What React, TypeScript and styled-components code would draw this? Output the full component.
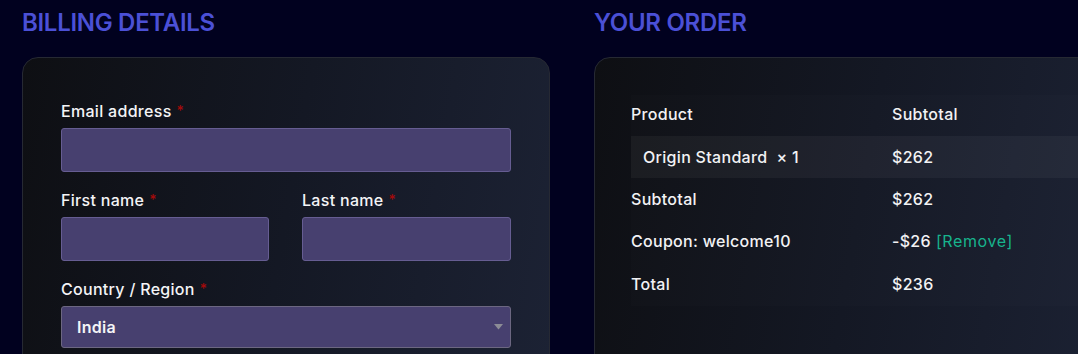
import React from "react";
import styled, { createGlobalStyle } from "styled-components";

const GlobalStyle = createGlobalStyle`
  html, body {
    margin: 0;
    padding: 0;
    background: #01011f;
  }
  body {
    font-family: Inter, "Noto Sans", sans-serif;
    color: #f2f2f4;
  }
  * {
    box-sizing: border-box;
  }
`;

const Page = styled.div`
  display: flex;
  gap: 44px;
  width: 1078px;
  height: 354px;
  padding-left: 22px;
  overflow: hidden;
  background: #01011f;
`;

const Column = styled.section`
  width: 528px;
  flex-shrink: 0;
`;

const Heading = styled.h2`
  margin: 0 0 16px;
  padding-top: 5px;
  font-size: 24px;
  line-height: 36px;
  font-weight: 600;
  letter-spacing: -0.3px;
  color: #4b50d6;
`;

const Card = styled.div<{ pad: string }>`
  border: 1px solid #262933;
  border-radius: 16px;
  background: linear-gradient(100deg, #0e0f13 0%, #141824 50%, #1c2234 100%);
  padding: ${(p) => p.pad};
  min-height: 320px;
`;

const Field = styled.div`
  display: flex;
  flex-direction: column;
  gap: 6px;
  margin-bottom: 17px;
`;

const Row = styled.div`
  display: grid;
  grid-template-columns: 208px 209px;
  gap: 33px;
`;

const Label = styled.label`
  font-size: 16px;
  line-height: 22px;
  font-weight: 500;
  letter-spacing: 0.3px;
  color: #f4f4f6;
`;

const Req = styled.span`
  color: #a30a0a;
  margin-left: 5px;
  font-size: 14px;
  vertical-align: 1px;
`;

const Input = styled.div`
  height: 44px;
  background: #47406f;
  border: 1px solid #665d92;
  border-radius: 3px;
`;

const Select = styled.div`
  height: 42px;
  display: flex;
  align-items: center;
  justify-content: space-between;
  padding: 0 7px 0 15px;
  background: #47406f;
  border: 1px solid #6c6781;
  border-radius: 3px;
  font-size: 16px;
  font-weight: 600;
  letter-spacing: 0.3px;
  color: #f4f4f6;
`;

const Table = styled.div`
  width: 454px;
  background: rgba(255, 255, 255, 0.012);
`;

const TRow = styled.div<{ shade?: boolean; h?: number; head?: boolean }>`
  display: grid;
  grid-template-columns: 261px 1fr;
  align-items: center;
  height: ${(p) => p.h ?? 42}px;
  padding-bottom: ${(p) => (p.head ? "4px" : "0")};
  background: ${(p) => (p.shade ? "rgba(255, 255, 255, 0.045)" : "transparent")};
  font-size: 16px;
  font-weight: 500;
  letter-spacing: 0.3px;
  color: #f2f2f4;
`;

const Cell = styled.div<{ indent?: boolean }>`
  padding-left: ${(p) => (p.indent ? "12px" : "0")};
  white-space: nowrap;
`;

const Remove = styled.span`
  color: #17b48d;
  font-weight: 400;
  letter-spacing: 0.6px;
  margin-left: 5px;
`;

const Arrow = () => (
  <svg width="9" height="6" viewBox="0 0 9 6">
    <path d="M0 0h9L4.5 5.5z" fill="#8c8c96" />
  </svg>
);

export default function App() {
  return (
    <>
      <GlobalStyle />
      <Page>
        <Column>
          <Heading>BILLING DETAILS</Heading>
          <Card pad="42px 38px 0">
            <Field>
              <Label>
                Email address<Req>*</Req>
              </Label>
              <Input />
            </Field>
            <Row>
              <Field>
                <Label>
                  First name<Req>*</Req>
                </Label>
                <Input />
              </Field>
              <Field>
                <Label>
                  Last name<Req>*</Req>
                </Label>
                <Input />
              </Field>
            </Row>
            <Field>
              <Label>
                Country / Region<Req>*</Req>
              </Label>
              <Select>
                India
                <Arrow />
              </Select>
            </Field>
          </Card>
        </Column>
        <Column>
          <Heading>YOUR ORDER</Heading>
          <Card pad="37px 36px 0">
            <Table>
              <TRow h={41} head>
                <Cell>Product</Cell>
                <Cell>Subtotal</Cell>
              </TRow>
              <TRow shade>
                <Cell indent>Origin Standard&nbsp;&nbsp;× 1</Cell>
                <Cell>$262</Cell>
              </TRow>
              <TRow>
                <Cell>Subtotal</Cell>
                <Cell>$262</Cell>
              </TRow>
              <TRow>
                <Cell>Coupon: welcome10</Cell>
                <Cell>
                  -$26<Remove>[Remove]</Remove>
                </Cell>
              </TRow>
              <TRow h={44}>
                <Cell>Total</Cell>
                <Cell>$236</Cell>
              </TRow>
            </Table>
          </Card>
        </Column>
      </Page>
    </>
  );
}
